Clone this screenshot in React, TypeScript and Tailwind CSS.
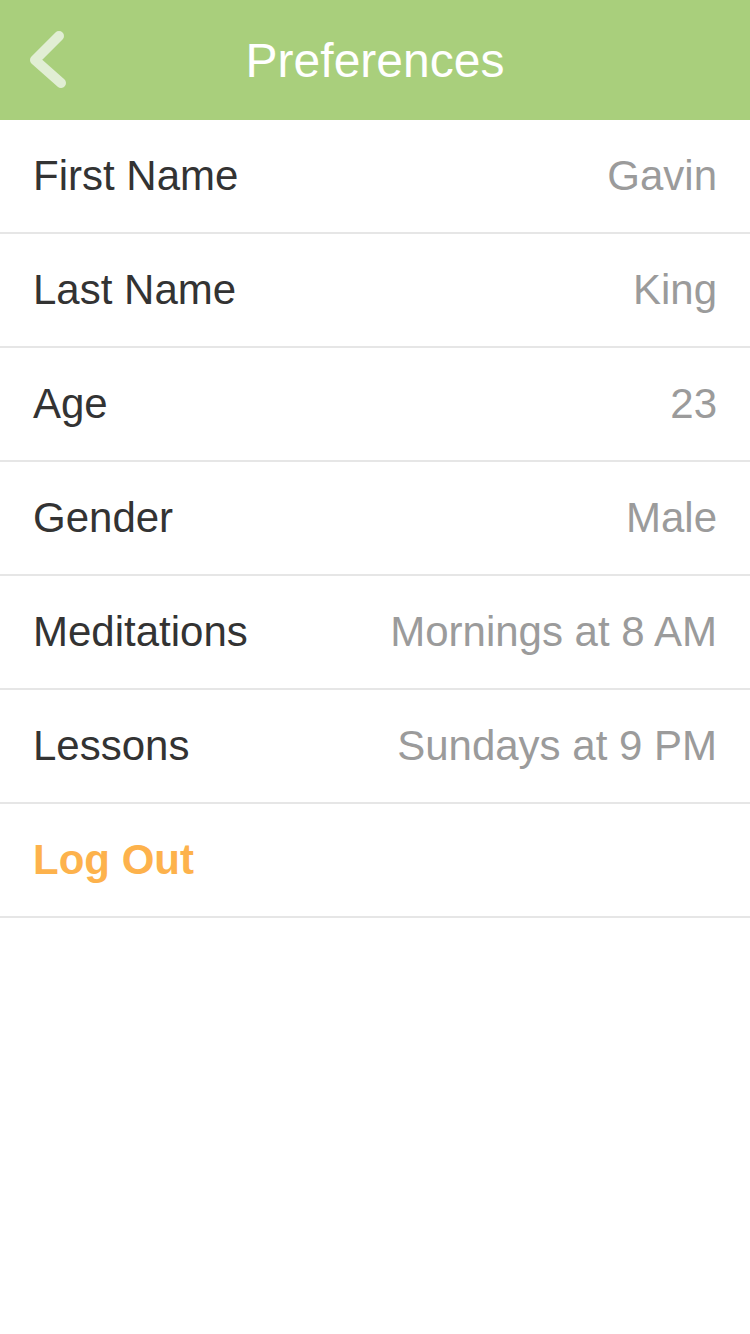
const rows = [
  { label: 'First Name', value: 'Gavin' },
  { label: 'Last Name', value: 'King' },
  { label: 'Age', value: '23' },
  { label: 'Gender', value: 'Male' },
  { label: 'Meditations', value: 'Mornings at 8 AM' },
  { label: 'Lessons', value: 'Sundays at 9 PM' },
]

function App() {
  return (
    <div className="min-h-screen bg-white font-['Liberation_Sans',Arial,sans-serif]">
      <header className="relative flex h-[120px] items-center justify-center bg-[#a9cf7c]">
        <button className="absolute left-[28px] top-[28px] h-[64px] w-[44px]">
          <svg width="44" height="64" viewBox="0 0 44 64">
            <polyline
              points="31,8 7,32 33,55"
              fill="none"
              stroke="#e1eed4"
              strokeWidth="10"
              strokeLinecap="round"
              strokeLinejoin="round"
            />
          </svg>
        </button>
        <h1 className="pt-[2px] text-[48px] leading-none text-white">Preferences</h1>
      </header>

      <ul>
        {rows.map((row) => (
          <li
            key={row.label}
            className="flex h-[114px] items-center justify-between border-b-2 border-[#e6e6e6] px-[33px] text-[42px] leading-none"
          >
            <span className="text-[#333333]">{row.label}</span>
            <span className="text-[#9b9b9b]">{row.value}</span>
          </li>
        ))}
        <li className="flex h-[114px] items-center border-b-2 border-[#e6e6e6] px-[33px] text-[42px] font-bold leading-none text-[#fdb24c]">
          Log Out
        </li>
      </ul>
    </div>
  )
}

export default App
